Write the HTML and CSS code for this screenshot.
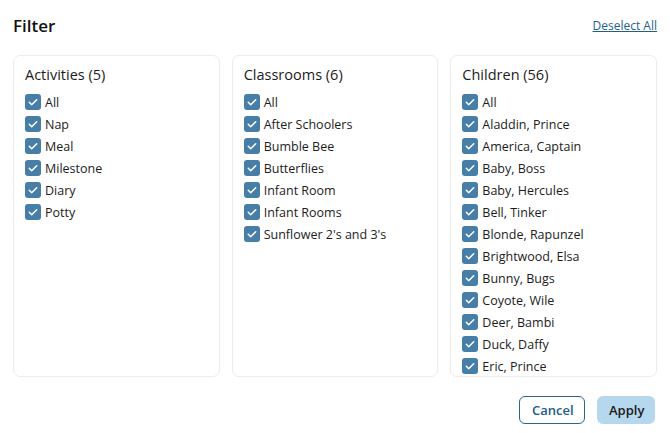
FILE: index.html
```html
<!DOCTYPE html>
<html>
<head>
<meta charset="utf-8">
<link rel="stylesheet" href="styles.css">
</head>
<body>
<div class="dialog">
  <div class="header">
    <h1 class="title">Filter</h1>
    <a class="deselect" href="#">Deselect All</a>
  </div>
  <div class="panels">
    <div class="panel">
      <div class="panel-title">Activities (5)</div>
      <ul class="list">
        <li class="item"><span class="cb"><svg viewBox="0 0 16 16"><path d="M4.3 8.3l2.4 2.4 5-5"/></svg></span>All</li>
        <li class="item"><span class="cb"><svg viewBox="0 0 16 16"><path d="M4.3 8.3l2.4 2.4 5-5"/></svg></span>Nap</li>
        <li class="item"><span class="cb"><svg viewBox="0 0 16 16"><path d="M4.3 8.3l2.4 2.4 5-5"/></svg></span>Meal</li>
        <li class="item"><span class="cb"><svg viewBox="0 0 16 16"><path d="M4.3 8.3l2.4 2.4 5-5"/></svg></span>Milestone</li>
        <li class="item"><span class="cb"><svg viewBox="0 0 16 16"><path d="M4.3 8.3l2.4 2.4 5-5"/></svg></span>Diary</li>
        <li class="item"><span class="cb"><svg viewBox="0 0 16 16"><path d="M4.3 8.3l2.4 2.4 5-5"/></svg></span>Potty</li>
      </ul>
    </div>
    <div class="panel">
      <div class="panel-title">Classrooms (6)</div>
      <ul class="list">
        <li class="item"><span class="cb"><svg viewBox="0 0 16 16"><path d="M4.3 8.3l2.4 2.4 5-5"/></svg></span>All</li>
        <li class="item"><span class="cb"><svg viewBox="0 0 16 16"><path d="M4.3 8.3l2.4 2.4 5-5"/></svg></span>After Schoolers</li>
        <li class="item"><span class="cb"><svg viewBox="0 0 16 16"><path d="M4.3 8.3l2.4 2.4 5-5"/></svg></span>Bumble Bee</li>
        <li class="item"><span class="cb"><svg viewBox="0 0 16 16"><path d="M4.3 8.3l2.4 2.4 5-5"/></svg></span>Butterflies</li>
        <li class="item"><span class="cb"><svg viewBox="0 0 16 16"><path d="M4.3 8.3l2.4 2.4 5-5"/></svg></span>Infant Room</li>
        <li class="item"><span class="cb"><svg viewBox="0 0 16 16"><path d="M4.3 8.3l2.4 2.4 5-5"/></svg></span>Infant Rooms</li>
        <li class="item"><span class="cb"><svg viewBox="0 0 16 16"><path d="M4.3 8.3l2.4 2.4 5-5"/></svg></span>Sunflower 2's and 3's</li>
      </ul>
    </div>
    <div class="panel">
      <div class="panel-title">Children (56)</div>
      <ul class="list">
        <li class="item"><span class="cb"><svg viewBox="0 0 16 16"><path d="M4.3 8.3l2.4 2.4 5-5"/></svg></span>All</li>
        <li class="item"><span class="cb"><svg viewBox="0 0 16 16"><path d="M4.3 8.3l2.4 2.4 5-5"/></svg></span>Aladdin, Prince</li>
        <li class="item"><span class="cb"><svg viewBox="0 0 16 16"><path d="M4.3 8.3l2.4 2.4 5-5"/></svg></span>America, Captain</li>
        <li class="item"><span class="cb"><svg viewBox="0 0 16 16"><path d="M4.3 8.3l2.4 2.4 5-5"/></svg></span>Baby, Boss</li>
        <li class="item"><span class="cb"><svg viewBox="0 0 16 16"><path d="M4.3 8.3l2.4 2.4 5-5"/></svg></span>Baby, Hercules</li>
        <li class="item"><span class="cb"><svg viewBox="0 0 16 16"><path d="M4.3 8.3l2.4 2.4 5-5"/></svg></span>Bell, Tinker</li>
        <li class="item"><span class="cb"><svg viewBox="0 0 16 16"><path d="M4.3 8.3l2.4 2.4 5-5"/></svg></span>Blonde, Rapunzel</li>
        <li class="item"><span class="cb"><svg viewBox="0 0 16 16"><path d="M4.3 8.3l2.4 2.4 5-5"/></svg></span>Brightwood, Elsa</li>
        <li class="item"><span class="cb"><svg viewBox="0 0 16 16"><path d="M4.3 8.3l2.4 2.4 5-5"/></svg></span>Bunny, Bugs</li>
        <li class="item"><span class="cb"><svg viewBox="0 0 16 16"><path d="M4.3 8.3l2.4 2.4 5-5"/></svg></span>Coyote, Wile</li>
        <li class="item"><span class="cb"><svg viewBox="0 0 16 16"><path d="M4.3 8.3l2.4 2.4 5-5"/></svg></span>Deer, Bambi</li>
        <li class="item"><span class="cb"><svg viewBox="0 0 16 16"><path d="M4.3 8.3l2.4 2.4 5-5"/></svg></span>Duck, Daffy</li>
        <li class="item"><span class="cb"><svg viewBox="0 0 16 16"><path d="M4.3 8.3l2.4 2.4 5-5"/></svg></span>Eric, Prince</li>
      </ul>
    </div>
  </div>
  <div class="footer">
    <button class="btn btn-cancel">Cancel</button>
    <button class="btn btn-apply">Apply</button>
  </div>
</div>
</body>
</html>
```
FILE: styles.css
```css
* { box-sizing: border-box; }
html, body { margin: 0; padding: 0; background: #fff; }
body {
  font-family: "Open Sans", "Noto Sans", sans-serif;
  color: #1c1c1c;
  width: 670px;
  height: 433px;
  overflow: hidden;
}
.dialog {
  padding: 14px 13px 0 13px;
  display: flex;
  flex-direction: column;
}
.header {
  display: flex;
  justify-content: space-between;
  align-items: center;
  height: 24px;
}
.title {
  margin: 0;
  font-size: 17px;
  font-weight: 600;
  color: #111;
  line-height: 24px;
}
.deselect {
  font-size: 12px;
  color: #1f5f8e;
  text-decoration: underline;
  line-height: 18px;
}
.panels {
  margin-top: 17px;
  display: flex;
  gap: 12px;
}
.panel {
  flex: 1;
  height: 322px;
  border: 1px solid #ececec;
  border-radius: 7px;
  padding: 9px 11px 0 11px;
  overflow: hidden;
}
.panel-title {
  font-size: 14.5px;
  line-height: 20px;
  color: #1c1c1c;
  margin-bottom: 9px;
}
.list {
  list-style: none;
  margin: 0;
  padding: 0;
  display: flex;
  flex-direction: column;
  gap: 6px;
}
.item {
  display: flex;
  align-items: center;
  gap: 4px;
  height: 16px;
  font-size: 12.5px;
  color: #1c1c1c;
}
.cb {
  width: 16px;
  height: 16px;
  border-radius: 3px;
  background: #467ea8;
  flex: none;
  display: flex;
}
.cb svg {
  width: 16px;
  height: 16px;
  fill: none;
  stroke: #fff;
  stroke-width: 1.5;
  stroke-linecap: round;
  stroke-linejoin: round;
}
.footer {
  display: flex;
  justify-content: flex-end;
  gap: 12px;
  margin-top: 19px;
  padding-right: 2px;
}
.btn {
  font-family: inherit;
  font-size: 13px;
  font-weight: 600;
  height: 28px;
  border-radius: 6px;
  padding: 0 12px;
  cursor: pointer;
}
.btn-cancel {
  background: #fff;
  border: 1.5px solid #2a6592;
  color: #225d8a;
  width: 66px;
}
.btn-apply {
  background: #b6d8ee;
  border: none;
  color: #1a1a1a;
  width: 58px;
}
```
